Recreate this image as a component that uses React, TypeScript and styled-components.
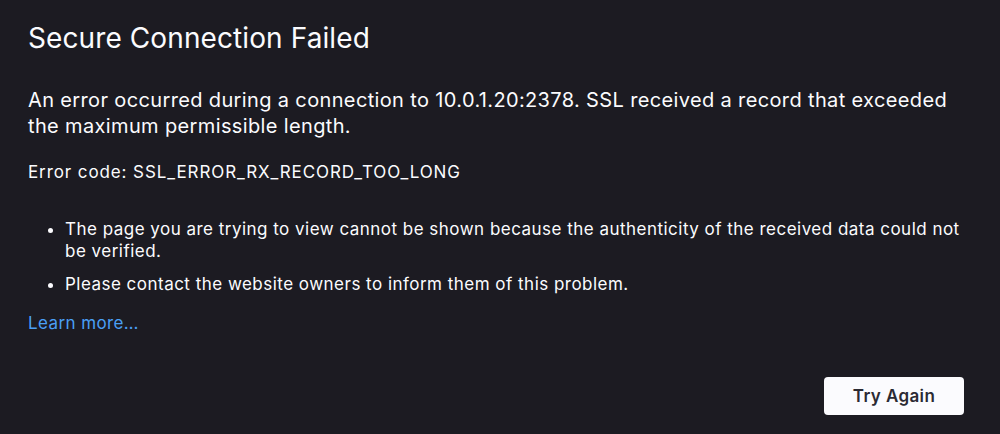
import styled, { createGlobalStyle } from "styled-components";

const GlobalStyle = createGlobalStyle`
  html, body {
    margin: 0;
    padding: 0;
    background: #1c1b22;
  }
  body {
    font-family: Inter, "Noto Sans", sans-serif;
    color: #fbfbfe;
  }
`;

const Page = styled.main`
  box-sizing: border-box;
  width: 1000px;
  height: 434px;
  padding: 18px 28px 0 28px;
  display: flex;
  flex-direction: column;
`;

const Title = styled.h1`
  margin: 0;
  font-size: 28px;
  font-weight: 400;
  line-height: 40px;
  letter-spacing: 0.1px;
`;

const Lead = styled.p`
  margin: 29px 0 0;
  font-size: 20px;
  line-height: 26px;
  letter-spacing: 0.36px;
`;

const Code = styled.p`
  margin: 22px 0 0;
  font-size: 17px;
  line-height: 22px;
  letter-spacing: 0.9px;
`;

const List = styled.ul`
  margin: 35px 0 0;
  padding-left: 37px;
  font-size: 17px;
  line-height: 22px;
  letter-spacing: 0.48px;
`;

const Item = styled.li`
  margin-bottom: 11px;

  &:last-child {
    margin-bottom: 0;
  }
`;

const LearnMore = styled.a`
  margin-top: 17px;
  align-self: flex-start;
  font-size: 17px;
  line-height: 22px;
  letter-spacing: 0.4px;
  color: #4a9ff5;
  text-decoration: none;
`;

const Actions = styled.div`
  margin-top: auto;
  margin-bottom: 19px;
  display: flex;
  justify-content: flex-end;
  padding-right: 8px;
`;

const Button = styled.button`
  width: 140px;
  height: 38px;
  border: none;
  border-radius: 4px;
  background: #fbfbfe;
  color: #2b2a33;
  font-family: Inter, "Noto Sans", sans-serif;
  font-size: 17px;
  font-weight: 600;
  letter-spacing: 0.4px;
`;

export default function App() {
  return (
    <>
      <GlobalStyle />
      <Page>
        <Title>Secure Connection Failed</Title>
        <Lead>
          An error occurred during a connection to 10.0.1.20:2378. SSL received
          a record that exceeded the maximum permissible length.
        </Lead>
        <Code>Error code: SSL_ERROR_RX_RECORD_TOO_LONG</Code>
        <List>
          <Item>
            The page you are trying to view cannot be shown because the
            authenticity of the received data could not be verified.
          </Item>
          <Item>
            Please contact the website owners to inform them of this problem.
          </Item>
        </List>
        <LearnMore href="#">Learn more…</LearnMore>
        <Actions>
          <Button>Try Again</Button>
        </Actions>
      </Page>
    </>
  );
}
